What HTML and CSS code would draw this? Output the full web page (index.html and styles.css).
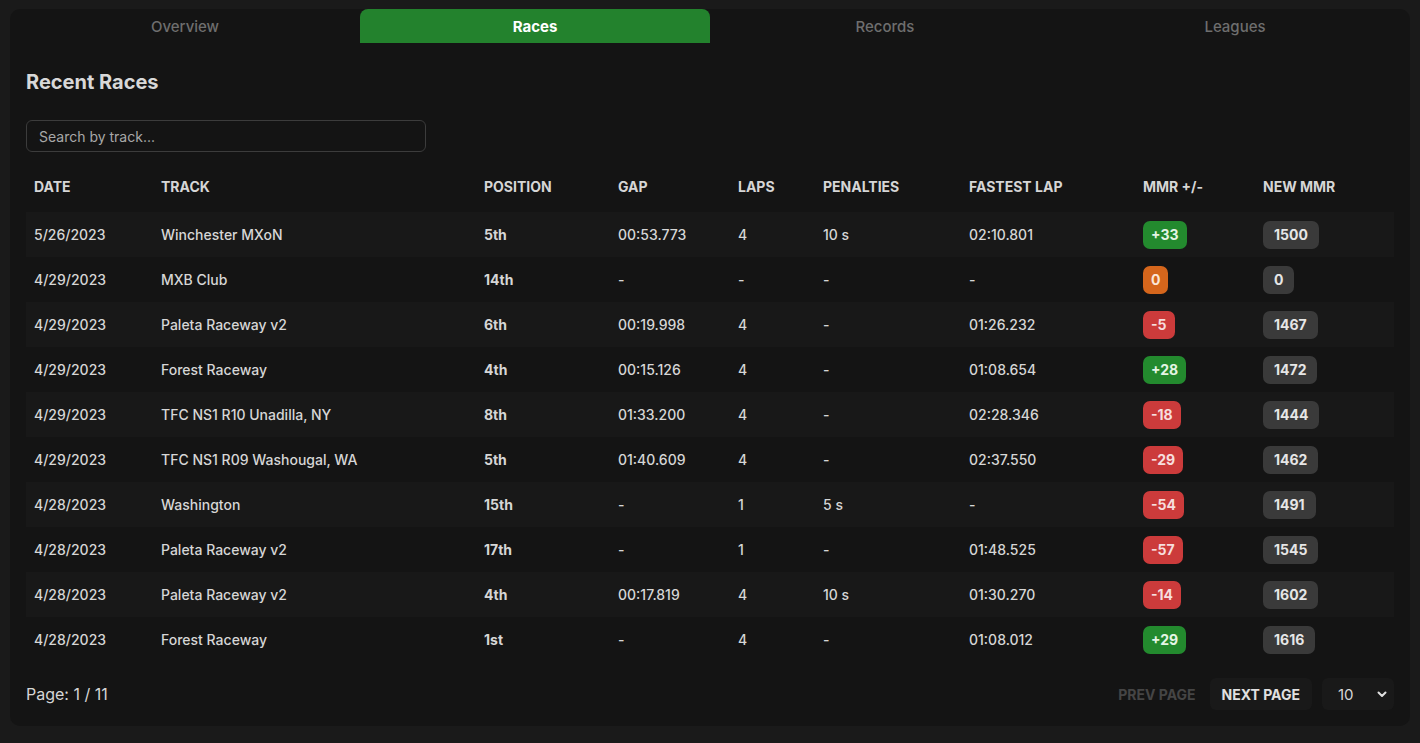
FILE: index.html
```html
<!DOCTYPE html>
<html>
<head>
<meta charset="utf-8">
<link rel="stylesheet" href="styles.css">
</head>
<body>
<div class="card">
  <nav class="tabs">
    <div class="tab">Overview</div>
    <div class="tab active">Races</div>
    <div class="tab">Records</div>
    <div class="tab">Leagues</div>
  </nav>
  <div class="content">
    <h2 class="title">Recent Races</h2>
    <input class="search" type="text" placeholder="Search by track...">
    <table class="races">
      <colgroup>
        <col style="width:127px"><col style="width:323px"><col style="width:134px"><col style="width:120px"><col style="width:85px"><col style="width:146px"><col style="width:174px"><col style="width:120px"><col>
      </colgroup>
      <thead>
        <tr><th>Date</th><th>Track</th><th>Position</th><th>Gap</th><th>Laps</th><th>Penalties</th><th>Fastest Lap</th><th>MMR +/-</th><th>New MMR</th></tr>
      </thead>
      <tbody>
        <tr><td>5/26/2023</td><td>Winchester MXoN</td><td class="pos">5th</td><td>00:53.773</td><td>4</td><td>10 s</td><td>02:10.801</td><td><span class="badge up">+33</span></td><td><span class="badge mmr">1500</span></td></tr>
        <tr><td>4/29/2023</td><td>MXB Club</td><td class="pos">14th</td><td>-</td><td>-</td><td>-</td><td>-</td><td><span class="badge zero">0</span></td><td><span class="badge mmr">0</span></td></tr>
        <tr><td>4/29/2023</td><td>Paleta Raceway v2</td><td class="pos">6th</td><td>00:19.998</td><td>4</td><td>-</td><td>01:26.232</td><td><span class="badge down">-5</span></td><td><span class="badge mmr">1467</span></td></tr>
        <tr><td>4/29/2023</td><td>Forest Raceway</td><td class="pos">4th</td><td>00:15.126</td><td>4</td><td>-</td><td>01:08.654</td><td><span class="badge up">+28</span></td><td><span class="badge mmr">1472</span></td></tr>
        <tr><td>4/29/2023</td><td>TFC NS1 R10 Unadilla, NY</td><td class="pos">8th</td><td>01:33.200</td><td>4</td><td>-</td><td>02:28.346</td><td><span class="badge down">-18</span></td><td><span class="badge mmr">1444</span></td></tr>
        <tr><td>4/29/2023</td><td>TFC NS1 R09 Washougal, WA</td><td class="pos">5th</td><td>01:40.609</td><td>4</td><td>-</td><td>02:37.550</td><td><span class="badge down">-29</span></td><td><span class="badge mmr">1462</span></td></tr>
        <tr><td>4/28/2023</td><td>Washington</td><td class="pos">15th</td><td>-</td><td>1</td><td>5 s</td><td>-</td><td><span class="badge down">-54</span></td><td><span class="badge mmr">1491</span></td></tr>
        <tr><td>4/28/2023</td><td>Paleta Raceway v2</td><td class="pos">17th</td><td>-</td><td>1</td><td>-</td><td>01:48.525</td><td><span class="badge down">-57</span></td><td><span class="badge mmr">1545</span></td></tr>
        <tr><td>4/28/2023</td><td>Paleta Raceway v2</td><td class="pos">4th</td><td>00:17.819</td><td>4</td><td>10 s</td><td>01:30.270</td><td><span class="badge down">-14</span></td><td><span class="badge mmr">1602</span></td></tr>
        <tr><td>4/28/2023</td><td>Forest Raceway</td><td class="pos">1st</td><td>-</td><td>4</td><td>-</td><td>01:08.012</td><td><span class="badge up">+29</span></td><td><span class="badge mmr">1616</span></td></tr>
      </tbody>
    </table>
    <div class="footer">
      <div class="page">Page: 1 / 11</div>
      <div class="pager">
        <button class="btn disabled">PREV PAGE</button>
        <button class="btn next">NEXT PAGE</button>
        <div class="select">
          <span>10</span>
          <svg width="12" height="12" viewBox="0 0 12 12"><path d="M2.5 4.5 L6 8 L9.5 4.5" fill="none" stroke="#e0e0e0" stroke-width="2" stroke-linecap="round" stroke-linejoin="round"/></svg>
        </div>
      </div>
    </div>
  </div>
</div>
</body>
</html>
```
FILE: styles.css
```css
html, body {
  margin: 0;
  background: #1a1a1a;
}
body {
  padding: 9px 10px 18px;
  font-family: Inter, "Noto Sans", sans-serif;
  color: #d6d6d6;
}
.card {
  background: #141414;
  border-radius: 10px;
  overflow: hidden;
}
.tabs {
  display: grid;
  grid-template-columns: repeat(4, 1fr);
}
.tab {
  height: 34px;
  display: flex;
  align-items: center;
  justify-content: center;
  font-size: 15px;
  font-weight: 500;
  color: #6e6e6e;
  border-radius: 8px 8px 0 0;
}
.tab.active {
  background: #23822d;
  color: #ffffff;
  font-weight: 700;
}
.content {
  padding: 0 16px 16px;
}
.title {
  margin: 0;
  padding-top: 27px;
  font-size: 20px;
  line-height: 24px;
  font-weight: 700;
  color: #d8d8d8;
}
.search {
  display: block;
  box-sizing: border-box;
  margin-top: 26px;
  width: 400px;
  height: 32px;
  background: #141414;
  border: 1px solid #3c3c3c;
  border-radius: 6px;
  padding: 0 12px;
  font-family: Inter, sans-serif;
  font-size: 14px;
  color: #d6d6d6;
  outline: none;
}
.search::placeholder {
  color: #a8a8a8;
}
.races {
  width: 100%;
  border-collapse: collapse;
  table-layout: fixed;
  margin-top: 8px;
}
.races th {
  text-align: left;
  font-size: 14px;
  font-weight: 700;
  text-transform: uppercase;
  color: #d6d6d6;
  height: 52px;
  padding: 0 8px;
}
.races td {
  height: 45px;
  padding: 0 8px;
  font-size: 14px;
  font-weight: 500;
  color: #d6d6d6;
}
.races tbody tr:nth-child(odd) {
  background: #181818;
}
.races td.pos {
  font-weight: 700;
}
.badge {
  display: inline-block;
  height: 28px;
  line-height: 28px;
  padding: 0 8px;
  border-radius: 7px;
  font-weight: 700;
  font-size: 14px;
  min-width: 8px;
  text-align: center;
}
.badge.up { background: #238a2e; color: #e4f5e4; }
.badge.down { background: #cc3b3b; color: #f6dede; }
.badge.zero { background: #d5661c; color: #fbe6d6; }
.badge.mmr { background: #3a3a3a; color: #e6e6e6; padding: 0 11px; }
.footer {
  display: flex;
  align-items: center;
  justify-content: space-between;
  margin-top: 16px;
}
.page {
  font-size: 16px;
  color: #d6d6d6;
}
.pager {
  display: flex;
  align-items: center;
  gap: 10px;
}
.btn {
  height: 32px;
  border: none;
  border-radius: 6px;
  padding: 0 12px;
  font-family: Inter, sans-serif;
  font-size: 14px;
  font-weight: 700;
  background: transparent;
  color: #e0e0e0;
}
.btn.disabled { color: #454545; margin-right: -8px; }
.btn.next { background: #191919; }
.select {
  box-sizing: border-box;
  width: 72px;
  height: 32px;
  border-radius: 6px;
  background: #191919;
  display: flex;
  align-items: center;
  justify-content: space-between;
  padding: 0 6px 0 16px;
  font-size: 15px;
  color: #d6d6d6;
}
```
